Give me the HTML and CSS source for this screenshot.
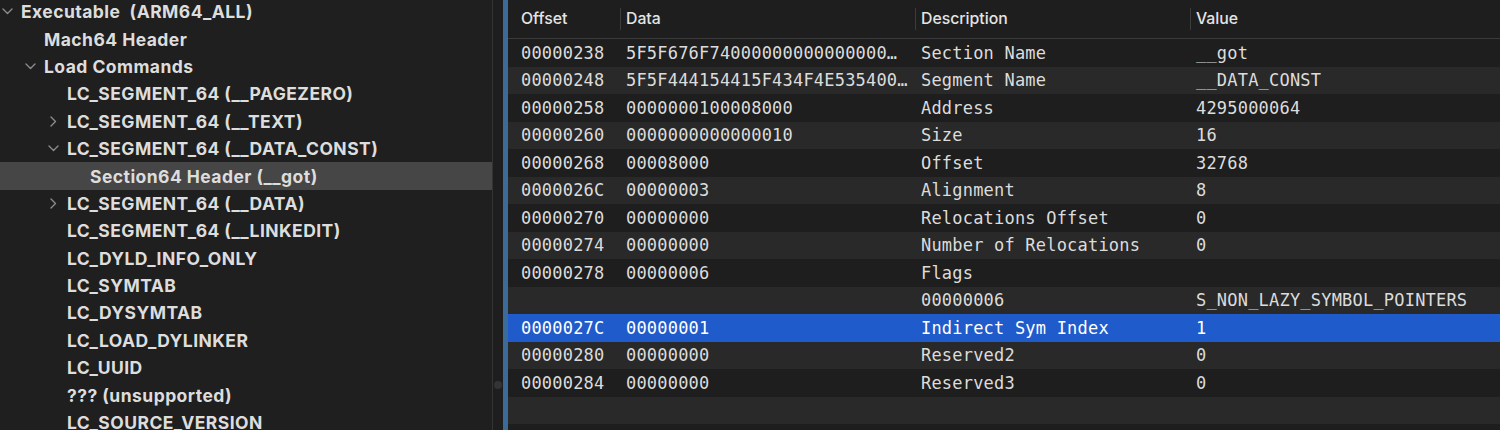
FILE: index.html
```html
<!DOCTYPE html>
<html>
<head>
<meta charset="utf-8">
<link rel="stylesheet" href="styles.css">
</head>
<body>
<div class="app">
  <nav class="tree">
    <div class="node lvl0"><span class="chev"><svg width="11" height="7" viewBox="0 0 11 7"><polyline points="1,1 5.5,5.5 10,1"/></svg></span><span class="label">Executable  (ARM64_ALL)</span></div>
    <div class="node lvl1"><span class="chev"></span><span class="label">Mach64 Header</span></div>
    <div class="node lvl1"><span class="chev"><svg width="11" height="7" viewBox="0 0 11 7"><polyline points="1,1 5.5,5.5 10,1"/></svg></span><span class="label">Load Commands</span></div>
    <div class="node lvl2"><span class="chev"></span><span class="label">LC_SEGMENT_64 (__PAGEZERO)</span></div>
    <div class="node lvl2"><span class="chev"><svg width="7" height="11" viewBox="0 0 7 11"><polyline points="1,1 5.5,5.5 1,10"/></svg></span><span class="label">LC_SEGMENT_64 (__TEXT)</span></div>
    <div class="node lvl2"><span class="chev"><svg width="11" height="7" viewBox="0 0 11 7"><polyline points="1,1 5.5,5.5 10,1"/></svg></span><span class="label">LC_SEGMENT_64 (__DATA_CONST)</span></div>
    <div class="node lvl3 selected"><span class="chev"></span><span class="label">Section64 Header (__got)</span></div>
    <div class="node lvl2"><span class="chev"><svg width="7" height="11" viewBox="0 0 7 11"><polyline points="1,1 5.5,5.5 1,10"/></svg></span><span class="label">LC_SEGMENT_64 (__DATA)</span></div>
    <div class="node lvl2"><span class="chev"></span><span class="label">LC_SEGMENT_64 (__LINKEDIT)</span></div>
    <div class="node lvl2"><span class="chev"></span><span class="label">LC_DYLD_INFO_ONLY</span></div>
    <div class="node lvl2"><span class="chev"></span><span class="label">LC_SYMTAB</span></div>
    <div class="node lvl2"><span class="chev"></span><span class="label">LC_DYSYMTAB</span></div>
    <div class="node lvl2"><span class="chev"></span><span class="label">LC_LOAD_DYLINKER</span></div>
    <div class="node lvl2"><span class="chev"></span><span class="label">LC_UUID</span></div>
    <div class="node lvl2"><span class="chev"></span><span class="label">??? (unsupported)</span></div>
    <div class="node lvl2"><span class="chev"></span><span class="label">LC_SOURCE_VERSION</span></div>
  </nav>
  <div class="gutter"><span class="handle"></span></div>
  <div class="focusbar"></div>
  <section class="table">
    <div class="thead">
      <div class="th first">Offset</div>
      <div class="th">Data</div>
      <div class="th">Description</div>
      <div class="th">Value</div>
    </div>
    <div class="tbody">
      <div class="tr"><div class="td first">00000238</div><div class="td">5F5F676F74000000000000000…</div><div class="td">Section Name</div><div class="td">__got</div></div>
      <div class="tr"><div class="td first">00000248</div><div class="td">5F5F444154415F434F4E535400…</div><div class="td">Segment Name</div><div class="td">__DATA_CONST</div></div>
      <div class="tr"><div class="td first">00000258</div><div class="td">0000000100008000</div><div class="td">Address</div><div class="td">4295000064</div></div>
      <div class="tr"><div class="td first">00000260</div><div class="td">0000000000000010</div><div class="td">Size</div><div class="td">16</div></div>
      <div class="tr"><div class="td first">00000268</div><div class="td">00008000</div><div class="td">Offset</div><div class="td">32768</div></div>
      <div class="tr"><div class="td first">0000026C</div><div class="td">00000003</div><div class="td">Alignment</div><div class="td">8</div></div>
      <div class="tr"><div class="td first">00000270</div><div class="td">00000000</div><div class="td">Relocations Offset</div><div class="td">0</div></div>
      <div class="tr"><div class="td first">00000274</div><div class="td">00000000</div><div class="td">Number of Relocations</div><div class="td">0</div></div>
      <div class="tr"><div class="td first">00000278</div><div class="td">00000006</div><div class="td">Flags</div><div class="td"></div></div>
      <div class="tr"><div class="td first"></div><div class="td"></div><div class="td">00000006</div><div class="td">S_NON_LAZY_SYMBOL_POINTERS</div></div>
      <div class="tr selected"><div class="td first">0000027C</div><div class="td">00000001</div><div class="td">Indirect Sym Index</div><div class="td">1</div></div>
      <div class="tr"><div class="td first">00000280</div><div class="td">00000000</div><div class="td">Reserved2</div><div class="td">0</div></div>
      <div class="tr"><div class="td first">00000284</div><div class="td">00000000</div><div class="td">Reserved3</div><div class="td">0</div></div>
      <div class="tr"><div class="td first"></div><div class="td"></div><div class="td"></div><div class="td"></div></div>
      <div class="tr"><div class="td first"></div><div class="td"></div><div class="td"></div><div class="td"></div></div>
    </div>
  </section>
</div>
</body>
</html>
```

FILE: styles.css
```css
html, body {
  margin: 0;
  padding: 0;
  background: #1e1e1e;
}
.app {
  display: flex;
  width: 1500px;
  height: 430px;
  overflow: hidden;
}
.tree {
  width: 492px;
  flex: none;
  background: #1f1f1f;
  border-right: 1px solid #343434;
  margin-top: -2px;
  font-family: Inter, "Noto Sans", sans-serif;
  font-weight: 700;
  font-size: 17.5px;
  letter-spacing: 0.45px;
  color: #dddddd;
}
.node {
  display: flex;
  align-items: center;
  height: 27.4px;
  white-space: pre;
}
.node.selected {
  background: #464646;
}
.lvl0 { padding-left: 0; }
.lvl1 { padding-left: 23px; }
.lvl2 { padding-left: 46px; }
.lvl3 { padding-left: 69px; }
.chev {
  width: 15px;
  margin-right: 6px;
  display: flex;
  justify-content: center;
  align-items: center;
  flex: none;
}
.chev svg {
  display: block;
}
.chev polyline {
  fill: none;
  stroke: #8c8c8c;
  stroke-width: 1.4;
  stroke-linecap: round;
  stroke-linejoin: round;
}
.gutter {
  width: 10px;
  flex: none;
  background: #1e1e1e;
  position: relative;
}
.handle {
  position: absolute;
  left: 1px;
  top: 381px;
  width: 8px;
  height: 8px;
  border-radius: 50%;
  background: #343434;
}
.focusbar {
  width: 5px;
  flex: none;
  background: #3b6b99;
}
.table {
  flex: 1;
  display: flex;
  flex-direction: column;
  background: #1e1e1e;
  min-width: 0;
}
.thead, .tr {
  display: grid;
  grid-template-columns: 112px 295px 275px 1fr;
  flex: none;
}
.tbody {
  flex: none;
}
.thead {
  height: 38px;
  border-bottom: 1px solid #3a3a3a;
  font-family: Inter, "Noto Sans", sans-serif;
  font-weight: 500;
  font-size: 15.8px;
  color: #e4e4e4;
  align-items: center;
}
.th {
  height: 22px;
  line-height: 22px;
  padding-left: 5px;
  border-left: 1px solid #3c3c3c;
}
.th.first {
  border-left: none;
  padding-left: 13px;
}
.tr {
  height: 27.5px;
  align-items: center;
  font-family: "DejaVu Sans Mono", "Liberation Mono", monospace;
  font-size: 17px;
  letter-spacing: 0.2px;
  color: #dcdcdc;
}
.tr:nth-child(even) {
  background: #292929;
}
.tr.selected {
  background: #1f5bcb;
  color: #ffffff;
}
.td {
  padding-left: 6px;
  padding-right: 2px;
  white-space: nowrap;
  overflow: hidden;
}
.td.first {
  padding-left: 13px;
}
```
